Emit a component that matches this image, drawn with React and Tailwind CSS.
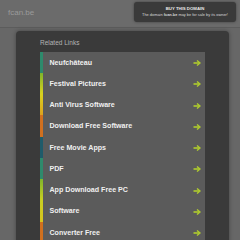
const links = [
  { label: "Neufchâteau", strip: "bg-[#2e8a6c]" },
  { label: "Festival Pictures", strip: "bg-gradient-to-b from-[#7fb52a] to-[#d8d21e]" },
  { label: "Anti Virus Software", strip: "bg-gradient-to-b from-[#d8d21e] to-[#dca21e]" },
  { label: "Download Free Software", strip: "bg-[#d0701f]" },
  { label: "Free Movie Apps", strip: "bg-[#1f5b6a]" },
  { label: "PDF", strip: "bg-[#2e8a6c]" },
  { label: "App Download Free PC", strip: "bg-gradient-to-b from-[#7fb52a] to-[#c8cf22]" },
  { label: "Software", strip: "bg-gradient-to-b from-[#c8cf22] to-[#d8c41e]" },
  { label: "Converter Free", strip: "bg-[#d0701f]" },
];

function Arrow() {
  return (
    <svg width="8" height="6" viewBox="0 0 8 6" className="shrink-0">
      <path d="M0.5 3h5.5" stroke="#b0cc2e" strokeWidth="1.6" />
      <path d="M4 0.5L7 3L4 5.5" fill="none" stroke="#b0cc2e" strokeWidth="1.4" />
    </svg>
  );
}

export default function App() {
  return (
    <div className="h-[240px] w-[240px] overflow-hidden bg-[#676767] font-['Liberation_Sans',Arial,sans-serif]">
      <header className="flex h-[28px] items-start justify-between border-b border-[#5c5c5c] bg-[#6b6b6b] pl-[8px] pr-[4px] pt-[2px]">
        <span className="mt-[7px] text-[8px] leading-none text-[#9a9a9a]">fcan.be</span>
        <div className="flex h-[20px] w-[102px] flex-col items-center justify-center rounded-[3px] bg-[#3a3a3a] shadow-[0_0_3px_rgba(0,0,0,0.4)]">
          <span className="text-[4.3px] font-bold leading-none text-[#e8e8e8]">BUY THIS DOMAIN</span>
          <span className="mt-[1.5px] text-[3.9px] leading-none text-[#d8d8d8]">
            The domain <b>fcan.be</b> may be for sale by its owner!
          </span>
        </div>
      </header>
      <main className="ml-[16px] mt-[3px] w-[213px] rounded-t-[4px] bg-[#3a3a3a] px-[24px] pb-4 pt-[9px] shadow-[0_0_4px_rgba(0,0,0,0.35)]">
        <h2 className="text-[6.5px] leading-none text-[#b4b4b4]">Related Links</h2>
        <ul className="mt-[5px] bg-[#5b5b5b]">
          {links.map((l) => (
            <li key={l.label} className="flex h-[21.25px] items-stretch">
              <span className={`w-[2.5px] ${l.strip}`} />
              <div className="flex flex-1 items-center justify-between pl-[7px] pr-[4px] pt-[2px]">
                <span className="text-[7.1px] font-bold leading-none text-[#f0f0f0]">{l.label}</span>
                <Arrow />
              </div>
            </li>
          ))}
        </ul>
      </main>
    </div>
  );
}
